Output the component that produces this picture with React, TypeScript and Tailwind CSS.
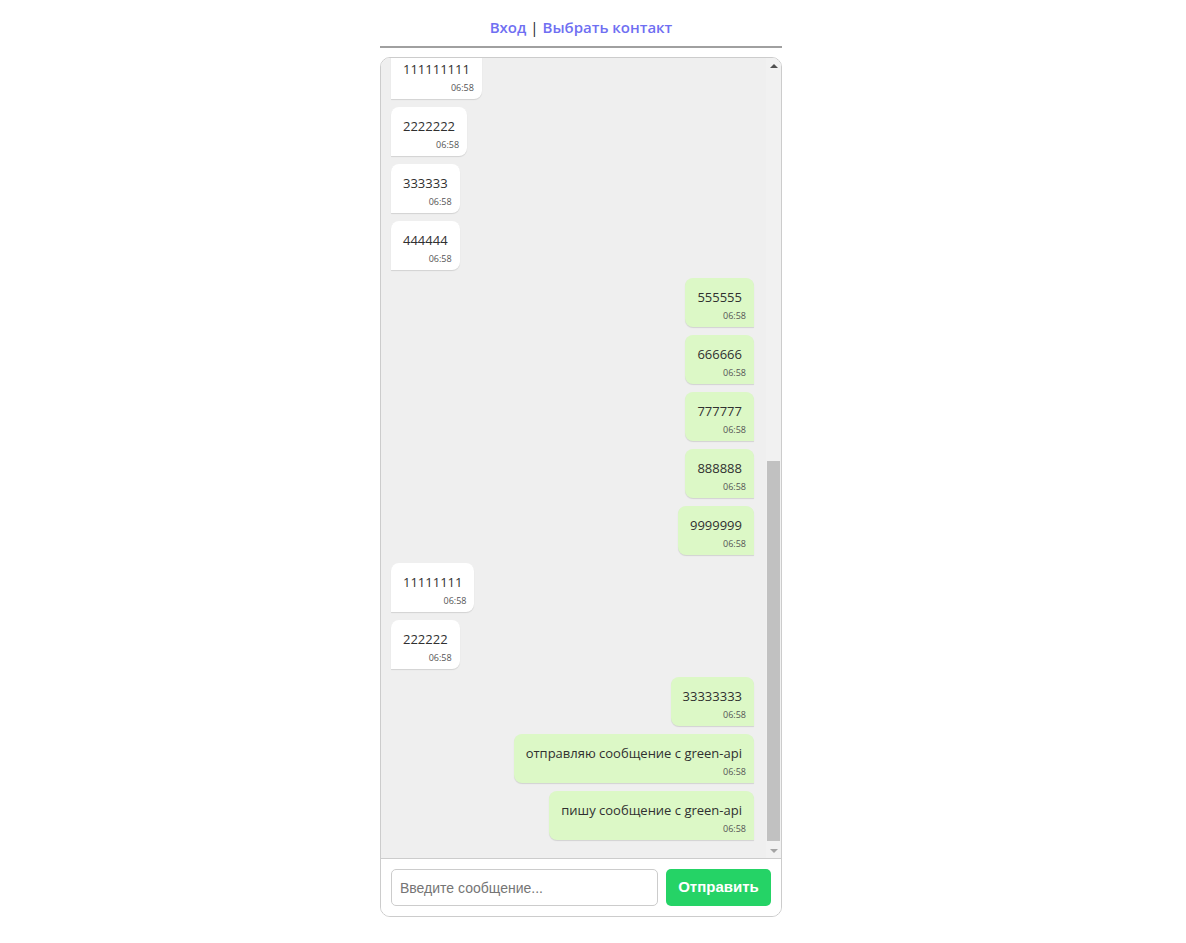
import { useEffect, useRef } from "react"

type Msg = { text: string; out: boolean }

// earlier history (scrolled out of view)
const older: Msg[] = [
  { text: "привет", out: false },
  { text: "привет!", out: true },
  { text: "как дела?", out: false },
  { text: "хорошо", out: true },
  { text: "тест", out: false },
  { text: "тест 2", out: true },
  { text: "123", out: false },
  { text: "456", out: true },
  { text: "789", out: false },
  { text: "000", out: true },
  { text: "ок", out: false },
  { text: "ок", out: true },
  { text: "1", out: false },
  { text: "2", out: true },
]

const messages: Msg[] = [
  ...older,
  { text: "111111111", out: false },
  { text: "2222222", out: false },
  { text: "333333", out: false },
  { text: "444444", out: false },
  { text: "555555", out: true },
  { text: "666666", out: true },
  { text: "777777", out: true },
  { text: "888888", out: true },
  { text: "9999999", out: true },
  { text: "11111111", out: false },
  { text: "222222", out: false },
  { text: "33333333", out: true },
  { text: "отправляю сообщение с green-api", out: true },
  { text: "пишу сообщение с green-api", out: true },
]

function Bubble({ m }: { m: Msg }) {
  return (
    <div className={`flex ${m.out ? "justify-end" : "justify-start"}`}>
      <div
        className={`pl-3 pr-3 pt-[10px] pb-[5px] rounded-lg shadow-[0_1px_1px_rgba(0,0,0,0.12)] ${
          m.out ? "bg-[#dcf8c6] rounded-br-none" : "bg-white rounded-bl-none"
        }`}
      >
        <div className="text-[13px] leading-[19px] text-[#303030]">{m.text}</div>
        <div className="mt-[3px] -mr-1 text-right text-[9px] leading-[12px] text-[#555]">06:58</div>
      </div>
    </div>
  )
}

// classic scrollbar look, thumb resting at the bottom
function ScrollBar() {
  return (
    <div className="w-[15px] shrink-0 flex flex-col bg-[#f1f1f1]">
      <div className="h-[15px] flex items-center justify-center">
        <div className="w-0 h-0 border-l-[4px] border-r-[4px] border-b-[4px] border-l-transparent border-r-transparent border-b-[#505050]" />
      </div>
      <div className="flex-1 flex flex-col justify-end px-[1px] pb-[2px]">
        <div className="h-[380px] bg-[#c1c1c1]" />
      </div>
      <div className="h-[15px] flex items-center justify-center">
        <div className="w-0 h-0 border-l-[4px] border-r-[4px] border-t-[4px] border-l-transparent border-r-transparent border-t-[#a3a3a3]" />
      </div>
    </div>
  )
}

export default function App() {
  const listRef = useRef<HTMLDivElement>(null)

  useEffect(() => {
    const el = listRef.current
    if (el) el.scrollTop = el.scrollHeight
  }, [])

  return (
    <div className="min-h-screen bg-white flex justify-center pr-6 font-['Open_Sans',sans-serif]">
      <div className="w-[402px]">
        {/* Header */}
        <div className="h-[48px] flex items-end justify-center pb-[9px] border-b-2 border-[#a0a0a0] text-[15px] leading-[20px] font-semibold">
          <a className="text-[#6f6ff2]">Вход</a>
          <span className="mx-1 text-[#222] font-normal">|</span>
          <a className="text-[#6f6ff2]">Выбрать контакт</a>
        </div>

        {/* Chat */}
        <div className="mt-[9px] border border-[#cccccc] rounded-[10px] overflow-hidden">
          <div className="h-[800px] flex bg-[#efefef]">
            <div ref={listRef} className="flex-1 overflow-hidden">
              <div className="flex flex-col gap-2 pl-[10px] pr-3 pt-2 pb-[18px]">
                {messages.map((m, i) => (
                  <Bubble key={i} m={m} />
                ))}
              </div>
            </div>
            <ScrollBar />
          </div>
          <div className="flex gap-2 p-[10px] border-t border-[#cccccc] bg-white">
            <input
              placeholder="Введите сообщение..."
              className="flex-1 h-[37px] px-2 border border-[#cccccc] rounded-[5px] text-[14px] font-['Liberation_Sans',sans-serif] placeholder:text-[#757575] outline-none"
            />
            <button className="w-[105px] h-[37px] rounded-[5px] bg-[#25d366] text-white font-bold text-[15px] font-['Liberation_Sans',sans-serif]">
              Отправить
            </button>
          </div>
        </div>
      </div>
    </div>
  )
}
